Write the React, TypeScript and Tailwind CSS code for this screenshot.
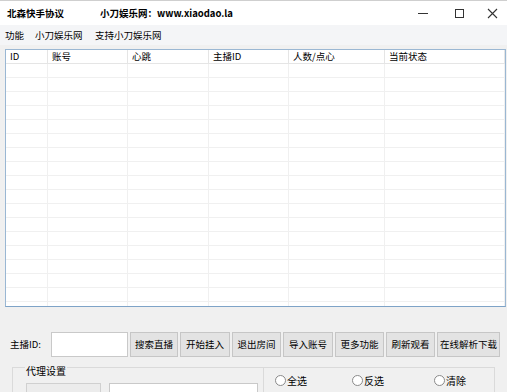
import React from "react";

const cols = ["ID", "账号", "心跳", "主播ID", "人数/点心", "当前状态"];
const buttons = [
  { t: "搜索直播", w: "w-[48px]" },
  { t: "开始挂入", w: "w-[50px]" },
  { t: "退出房间", w: "w-[49px]" },
  { t: "导入账号", w: "w-[50px]" },
  { t: "更多功能", w: "w-[49px]" },
  { t: "刷新观看", w: "w-[49px]" },
  { t: "在线解析下载", w: "w-[63px]" },
];

function Radio({ label }: { label: string }) {
  return (
    <div className="flex items-center gap-[1px]">
      <span className="w-[11px] h-[11px] rounded-full border border-[#8a8a8a] bg-white" />
      <span>{label}</span>
    </div>
  );
}

export default function App() {
  const rows = Array.from({ length: 18 });
  return (
    <div
      className="relative w-[507px] h-[392px] overflow-hidden bg-[#f0f0f0] text-[10px] text-black"
      style={{ fontFamily: '"Noto Sans CJK SC", "Noto Sans", sans-serif' }}
    >
      {/* Title bar */}
      <div className="h-[25px] bg-white border-t border-[#cfcfcf] flex items-center">
        <span className="pl-[7px] font-bold text-[9.5px] w-[100px]">北森快手协议</span>
        <span className="font-bold text-[9.5px]">小刀娱乐网：www.xiaodao.la</span>
        <div className="ml-auto flex items-center h-full">
          <span className="w-[36px] flex justify-center">
            <span className="block w-[10px] h-[1px] bg-[#333]" />
          </span>
          <span className="w-[36px] flex justify-center">
            <span className="block w-[9px] h-[9px] border border-[#333]" />
          </span>
          <span className="w-[30px] flex justify-center">
            <svg width="11" height="11" viewBox="0 0 11 11">
              <path d="M1 1L10 10M10 1L1 10" stroke="#333" strokeWidth="1.1" />
            </svg>
          </span>
        </div>
      </div>
      {/* Menu bar */}
      <div className="h-[20px] bg-[#f4f5f7] flex items-center pl-[5px] text-[9.5px]">
        <span className="w-[30px]">功能</span>
        <span className="w-[60px]">小刀娱乐网</span>
        <span>支持小刀娱乐网</span>
      </div>
      <div className="h-[4px] bg-[#f0f0f0]" />
      {/* List */}
      <div className="ml-[5px] w-[501px] h-[258px] bg-white border border-[#9ab7d3] border-b-[#7ea3c7] overflow-hidden">
        <div className="grid grid-cols-[42px_80px_81px_80px_96px_1fr] h-[14px] border-b border-[#e5e5e5] leading-[13px]">
          {cols.map((c) => (
            <div key={c} className="border-r border-[#e5e5e5] pl-[4px] text-[9.5px]">
              {c}
            </div>
          ))}
        </div>
        {rows.map((_, i) => (
          <div
            key={i}
            className="grid grid-cols-[42px_80px_81px_80px_96px_1fr] h-[14px] border-b border-[#f0f0f0]"
          >
            {cols.map((c) => (
              <div key={c} className="border-r border-[#f0f0f0]" />
            ))}
          </div>
        ))}
      </div>
      {/* Controls row */}
      <div className="mt-[25px] flex items-center h-[25px]">
        <span className="pl-[10px] w-[51px] text-[9.5px]">主播ID:</span>
        <div className="w-[77px] h-[25px] bg-white border border-[#c9c9c9]" />
        <div className="ml-[2px] flex gap-[2px] h-[25px]">
          {buttons.map((b) => (
            <div
              key={b.t}
              className={`${b.w} h-[25px] bg-[#e3e3e3] border border-[#c6c6c6] flex items-center justify-center text-[9.5px] whitespace-nowrap`}
            >
              {b.t}
            </div>
          ))}
        </div>
      </div>
      {/* Groups */}
      <div className="mt-[10px] flex">
        <div className="ml-[12px] w-[251px] h-[40px] border-l border-t border-[#dadada] relative">
          <span className="absolute left-[12px] top-[-5px] px-[1px] bg-[#f0f0f0] text-[10px]">代理设置</span>
          <div className="flex mt-[15px] ml-[13px] gap-[8px]">
            <div className="w-[75px] h-[20px] bg-[#ececec] border border-[#d0d0d0]" />
            <div className="w-[149px] h-[20px] bg-white border border-[#c9c9c9]" />
          </div>
        </div>
        <div className="w-[232px] h-[40px] border-l border-t border-r border-[#dadada] flex items-start pt-[5px] pl-[11px] text-[10px]">
          <div className="w-[77px]"><Radio label="全选" /></div>
          <div className="w-[82px]"><Radio label="反选" /></div>
          <Radio label="清除" />
        </div>
      </div>
    </div>
  );
}
